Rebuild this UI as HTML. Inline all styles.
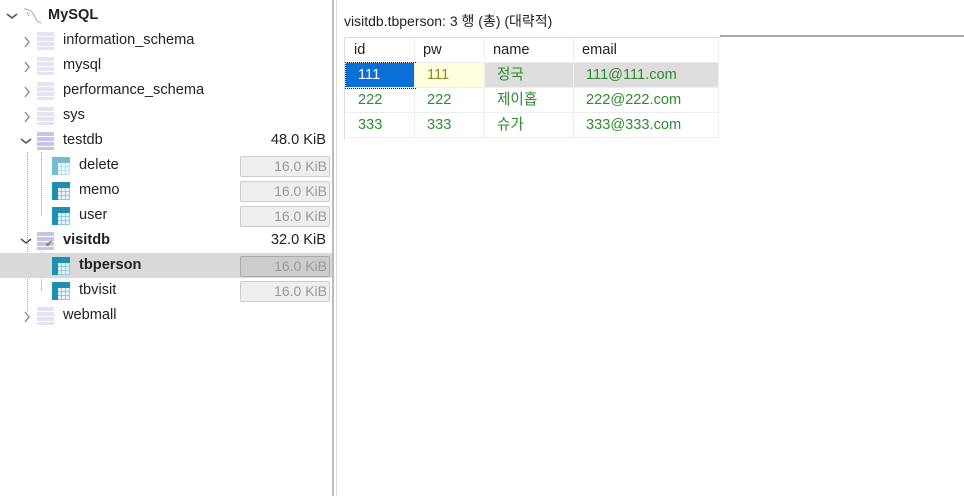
<!DOCTYPE html><html><head><meta charset="utf-8"><style>
body{margin:0;width:964px;height:496px;background:#fff;font-family:"Liberation Sans","Noto Sans CJK KR",sans-serif;font-size:14.6px;color:#222;position:relative;overflow:hidden}
.a{position:absolute;white-space:nowrap}
.row{position:absolute;left:0;width:332px;height:25px}
.t{position:absolute;top:4px}
.chev{position:absolute;top:8px}
.db{position:absolute;top:4px;width:17px;height:18px;background:repeating-linear-gradient(#e6e2f4 0 4px,#fff 4px 5px)}
.tb{position:absolute;top:4px;width:18px;height:18px;background:#1d8fb0}
.tb:after{content:"";position:absolute;left:6px;top:6px;width:12px;height:12px;background:repeating-linear-gradient(90deg,transparent 0 3px,#8fcbe4 3px 4px),repeating-linear-gradient(#e6f5fb 0 3px,#8fcbe4 3px 4px)}
.sz{position:absolute;left:240px;top:3px;width:86px;height:19px;border:1px solid #ccc;background:#eee;border-radius:2px;color:#999;text-align:right;padding-right:2px;line-height:19px;font-size:14px}
.gc{position:absolute;height:25px;line-height:25px;border-right:1px solid #eee;border-bottom:1px solid #eee;box-sizing:border-box;padding-left:8px}
.g{color:#2e8b2e;padding-left:12px}
</style></head><body>
<div class="a" style="left:332px;top:0;width:2px;height:496px;background:#bbb"></div>
<div class="a" style="left:336px;top:0;width:1px;height:496px;background:#ddd"></div>
<div class="a" style="left:720px;top:35px;width:244px;height:2px;background:#aaa"></div>
<div class="a" style="left:27px;top:152px;height:160px;border-left:1px dotted #aaa"></div>
<div class="a" style="left:41px;top:152px;height:64px;border-left:1px dotted #aaa"></div>
<div class="a" style="left:41px;top:252px;height:39px;border-left:1px dotted #aaa"></div>

<div class="row" style="top:3px"><svg class="chev" style="left:6px" width="12" height="10"><path d="M1 3l5 4 5-4" stroke="#555" stroke-width="1.6" fill="none"/></svg><svg class="a" style="left:22px;top:3px" width="20" height="18"><path d="M2 3c5 0 9 3 11 8 1 3 3 5 6 6M5 6l2 4" stroke="#9ab" fill="none"/></svg><b class="t" style="left:48px">MySQL</b></div>
<div class="row" style="top:28px"><svg class="chev" style="left:22px" width="10" height="12"><path d="M3 1l4 5-4 5" stroke="#888" stroke-width="1.4" fill="none"/></svg><div class="db" style="left:37px"></div><span class="t" style="left:63px">information_schema</span></div>
<div class="row" style="top:53px"><svg class="chev" style="left:22px" width="10" height="12"><path d="M3 1l4 5-4 5" stroke="#888" stroke-width="1.4" fill="none"/></svg><div class="db" style="left:37px"></div><span class="t" style="left:63px">mysql</span></div>
<div class="row" style="top:78px"><svg class="chev" style="left:22px" width="10" height="12"><path d="M3 1l4 5-4 5" stroke="#888" stroke-width="1.4" fill="none"/></svg><div class="db" style="left:37px"></div><span class="t" style="left:63px">performance_schema</span></div>
<div class="row" style="top:103px"><svg class="chev" style="left:22px" width="10" height="12"><path d="M3 1l4 5-4 5" stroke="#888" stroke-width="1.4" fill="none"/></svg><div class="db" style="left:37px"></div><span class="t" style="left:63px">sys</span></div>
<div class="row" style="top:128px"><svg class="chev" style="left:20px" width="12" height="10"><path d="M1 3l5 4 5-4" stroke="#555" stroke-width="1.6" fill="none"/></svg><div class="db" style="left:37px;background:repeating-linear-gradient(#cbc2ea 0 4px,#fff 4px 5px)"></div><span class="t" style="left:63px">testdb</span><span class="t" style="right:6px">48.0 KiB</span></div>
<div class="row" style="top:153px"><div class="tb" style="left:52px;opacity:.6"></div><span class="t" style="left:79px">delete</span><div class="sz">16.0 KiB</div></div>
<div class="row" style="top:178px"><div class="tb" style="left:52px"></div><span class="t" style="left:79px">memo</span><div class="sz">16.0 KiB</div></div>
<div class="row" style="top:203px"><div class="tb" style="left:52px"></div><span class="t" style="left:79px">user</span><div class="sz">16.0 KiB</div></div>
<div class="row" style="top:228px"><svg class="chev" style="left:20px" width="12" height="10"><path d="M1 3l5 4 5-4" stroke="#555" stroke-width="1.6" fill="none"/></svg><div class="db" style="left:37px;background:repeating-linear-gradient(#cbc2ea 0 4px,#fff 4px 5px)"></div><span class="a" style="left:45px;top:11px;color:#3a3;font-size:10px">✔</span><b class="t" style="left:63px">visitdb</b><span class="t" style="right:6px">32.0 KiB</span></div>
<div class="row" style="top:253px;background:#d9d9d9"><div class="tb" style="left:52px"></div><b class="t" style="left:79px">tbperson</b><div class="sz" style="background:#ccc;border-color:#aaa">16.0 KiB</div></div>
<div class="row" style="top:278px"><div class="tb" style="left:52px"></div><span class="t" style="left:79px">tbvisit</span><div class="sz">16.0 KiB</div></div>
<div class="row" style="top:303px"><svg class="chev" style="left:22px" width="10" height="12"><path d="M3 1l4 5-4 5" stroke="#888" stroke-width="1.4" fill="none"/></svg><div class="db" style="left:37px"></div><span class="t" style="left:63px">webmall</span></div>

<div class="a" style="left:344px;top:11px;font-size:14px">visitdb.tbperson: 3 행 (총) (대략적)</div>
<div class="a" style="left:344px;top:37px;width:376px;height:102px;border-top:1px solid #ddd;border-left:1px solid #ddd"></div>
<div class="gc a" style="left:346px;top:38px;width:69px">id</div>
<div class="gc a" style="left:415px;top:38px;width:70px">pw</div>
<div class="gc a" style="left:485px;top:38px;width:89px">name</div>
<div class="gc a" style="left:574px;top:38px;width:145px">email</div>
<div class="gc a" style="left:346px;top:63px;width:69px;background:#0a6fd6;color:#fff;padding-left:12px;outline:1px dotted #024">111</div>
<div class="gc a g" style="left:415px;top:63px;width:70px;background:#ffffe0;color:#8a8a20">111</div>
<div class="gc a g" style="left:485px;top:63px;width:89px;background:#ddd">정국</div>
<div class="gc a g" style="left:574px;top:63px;width:145px;background:#ddd">111@111.com</div>
<div class="gc a g" style="left:346px;top:88px;width:69px">222</div>
<div class="gc a g" style="left:415px;top:88px;width:70px">222</div>
<div class="gc a g" style="left:485px;top:88px;width:89px">제이홉</div>
<div class="gc a g" style="left:574px;top:88px;width:145px">222@222.com</div>
<div class="gc a g" style="left:346px;top:113px;width:69px">333</div>
<div class="gc a g" style="left:415px;top:113px;width:70px">333</div>
<div class="gc a g" style="left:485px;top:113px;width:89px">슈가</div>
<div class="gc a g" style="left:574px;top:113px;width:145px">333@333.com</div>
</body></html>
